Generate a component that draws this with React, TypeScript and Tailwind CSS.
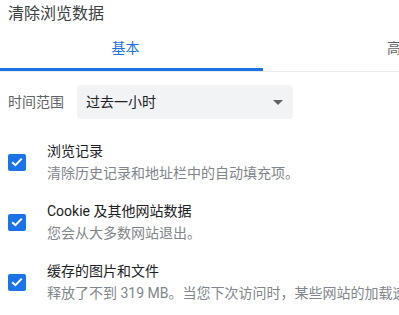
export default function App() {
  const items = [
    { title: "浏览记录", desc: "清除历史记录和地址栏中的自动填充项。" },
    { title: "Cookie 及其他网站数据", desc: "您会从大多数网站退出。" },
    {
      title: "缓存的图片和文件",
      desc: "释放了不到 319 MB。当您下次访问时，某些网站的加载速度可能会变慢。",
    },
  ];

  return (
    <div
      className="w-[399px] h-[315px] overflow-hidden bg-white text-[#202124]"
      style={{ fontFamily: 'Roboto, "Noto Sans CJK SC", sans-serif' }}
    >
      <div className="h-[28px] px-[8px] pt-[2px] text-[16px] leading-[24px] text-[#3c4043]">
        清除浏览数据
      </div>

      {/* tabs */}
      <div className="flex h-[44px] border-b border-[#e8eaed] whitespace-nowrap">
        <div className="flex flex-col w-[263px] shrink-0">
          <div className="flex-1 flex items-center justify-center text-[14px] text-[#1a73e8] pr-[12px]">
            基本
          </div>
          <div className="h-[3px] bg-[#1a73e8]" />
        </div>
        <div className="flex-1 flex items-center pl-[124px] pb-[3px] text-[14px] text-[#5f6368]">
          高级
        </div>
      </div>

      {/* time range */}
      <div className="flex items-center mt-[13px] px-[8px]">
        <div className="w-[69px] shrink-0 text-[14px] text-[#5f6368]">时间范围</div>
        <div className="flex items-center justify-between w-[216px] h-[34px] rounded-[4px] bg-[#f1f3f4] pl-[9px] pr-[10px] text-[14px]">
          <span>过去一小时</span>
          <svg width="10" height="5" viewBox="0 0 10 5">
            <path d="M0 0 L10 0 L5 5 Z" fill="#5f6368" />
          </svg>
        </div>
      </div>

      {/* checkboxes */}
      <div className="flex flex-col gap-[16px] mt-[21px]">
        {items.map((it) => (
          <div key={it.title} className="flex items-center whitespace-nowrap">
            <div className="w-[47px] shrink-0 pl-[8px]">
              <div className="w-[18px] h-[17px] rounded-[2px] bg-[#1a73e8] flex items-center justify-center">
                <svg width="12" height="10" viewBox="0 0 12 10">
                  <path
                    d="M1.2 5.2 L4.4 8.2 L10.8 1.6"
                    fill="none"
                    stroke="white"
                    strokeWidth="2"
                  />
                </svg>
              </div>
            </div>
            <div className="flex flex-col">
              <div className="text-[14px] leading-[22px] text-[#202124]">{it.title}</div>
              <div className="text-[14px] leading-[22px] text-[#80868b]">{it.desc}</div>
            </div>
          </div>
        ))}
      </div>
    </div>
  );
}
